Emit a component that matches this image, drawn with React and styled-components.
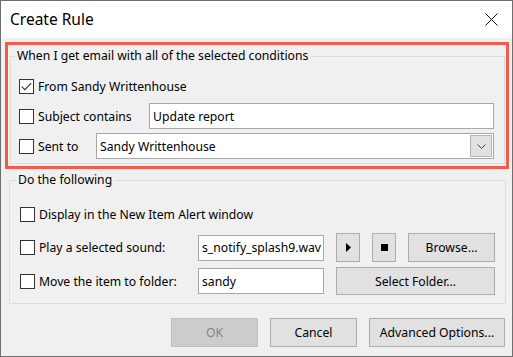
import React from "react";
import styled, { createGlobalStyle } from "styled-components";

const Global = createGlobalStyle`
  html, body { margin: 0; padding: 0; background: #ffffff; }
  * { box-sizing: border-box; }
  body { font-family: "Noto Sans", "Open Sans", sans-serif; }
`;

const Window = styled.div`
  width: 513px;
  height: 357px;
  border: 1px solid #6f6f6f;
  display: flex;
  flex-direction: column;
  background: #f0f0f0;
  font-family: "Noto Sans", "Open Sans", sans-serif;
  font-size: 12.2px;
  color: #000;
`;

const TitleBar = styled.div`
  height: 37px;
  flex: none;
  background: #ffffff;
  display: flex;
  align-items: center;
  justify-content: space-between;
  padding: 0 14px 0 9px;
`;

const Title = styled.div`
  font-size: 15.5px;
  color: #000;
  padding-bottom: 1px;
`;

const CloseBtn = styled.div`
  width: 14px;
  height: 14px;
  display: flex;
  align-items: center;
  justify-content: center;
`;

const Body = styled.div`
  flex: 1;
  display: flex;
  flex-direction: column;
  padding: 4px 7px 9px 4px;
`;

const Highlight = styled.div`
  width: 504px;
  height: 127px;
  border: 3px solid #f45a4d;
  padding: 11px 0 0 2px;
  display: flex;
  flex-direction: column;
`;

const Group = styled.div`
  position: relative;
  border: 1px solid #dcdcdc;
  width: ${(p) => p.$w}px;
  height: ${(p) => p.$h}px;
  margin-left: ${(p) => p.$ml || 0}px;
  margin-top: ${(p) => p.$mt || 0}px;
  padding: ${(p) => p.$pt}px 10px 0 ${(p) => p.$pl}px;
  display: flex;
  flex-direction: column;
`;

const Legend = styled.span`
  position: absolute;
  top: -10px;
  left: ${(p) => p.$l}px;
  padding: 0 2px 0 2px;
  background: #f0f0f0;
  line-height: 18px;
  white-space: nowrap;
`;

const Row = styled.div`
  display: flex;
  align-items: center;
  height: ${(p) => p.$h}px;
  margin-top: ${(p) => p.$mt || 0}px;
`;

const Box = styled.span`
  width: 15px;
  height: 15px;
  flex: none;
  border: 1px solid #333333;
  background: #ffffff;
  display: flex;
  align-items: center;
  justify-content: center;
`;

const Label = styled.span`
  margin-left: 4px;
  white-space: nowrap;
  width: ${(p) => (p.$w ? `${p.$w}px` : "auto")};
  flex: none;
`;

const TextBox = styled.div`
  height: ${(p) => p.$h || 26}px;
  width: ${(p) => (p.$w ? `${p.$w}px` : "auto")};
  flex: ${(p) => (p.$w ? "none" : "1")};
  border: 1px solid #a8a8a8;
  background: #ffffff;
  display: flex;
  align-items: center;
  padding-left: 3px;
  white-space: nowrap;
  overflow: hidden;
  position: relative;
`;

const DropBtn = styled.span`
  position: absolute;
  right: 1px;
  top: 1px;
  bottom: 1px;
  width: 22px;
  background: #e1e1e1;
  border: 1px solid #b5b5b5;
  display: flex;
  align-items: center;
  justify-content: center;
`;

const Button = styled.div`
  height: ${(p) => p.$h || 29}px;
  width: ${(p) => p.$w}px;
  margin-left: ${(p) => p.$ml || 0}px;
  flex: none;
  background: ${(p) => (p.$disabled ? "#cccccc" : "#e1e1e1")};
  border: 1px solid ${(p) => (p.$disabled ? "#bfbfbf" : "#adadad")};
  color: ${(p) => (p.$disabled ? "#838383" : "#000")};
  display: flex;
  align-items: center;
  justify-content: center;
  white-space: nowrap;
`;

const Footer = styled.div`
  display: flex;
  justify-content: flex-end;
  margin-top: 14px;
`;

const Check = ({ checked }) => (
  <Box>
    {checked && (
      <svg width="11" height="9" viewBox="0 0 11 9">
        <path d="M0.8 4.6 L3.8 7.6 L10.2 1.2" fill="none" stroke="#333" strokeWidth="1.1" />
      </svg>
    )}
  </Box>
);

export default function App() {
  return (
    <>
      <Global />
      <Window>
        <TitleBar>
          <Title>Create Rule</Title>
          <CloseBtn>
            <svg width="13" height="13" viewBox="0 0 13 13">
              <path d="M0.5 0.5 L12.5 12.5 M12.5 0.5 L0.5 12.5" stroke="#111" strokeWidth="1" />
            </svg>
          </CloseBtn>
        </TitleBar>
        <Body>
          <Highlight>
            <Group $w={495} $h={108} $pt={22} $pl={8}>
              <Legend $l={4}>When I get email with all of the selected conditions</Legend>
              <Row $h={15}>
                <Check checked />
                <Label>From Sandy Writtenhouse</Label>
              </Row>
              <Row $h={26} $mt={9}>
                <Check />
                <Label $w={111}>Subject contains</Label>
                <TextBox>Update report</TextBox>
              </Row>
              <Row $h={26} $mt={4}>
                <Check />
                <Label $w={58}>Sent to</Label>
                <TextBox>
                  Sandy Writtenhouse
                  <DropBtn>
                    <svg width="9" height="5" viewBox="0 0 9 5">
                      <path d="M0.5 0.5 L4.5 4.5 L8.5 0.5" fill="none" stroke="#444" strokeWidth="1" />
                    </svg>
                  </DropBtn>
                </TextBox>
              </Row>
            </Group>
          </Highlight>
          <Group $w={497} $h={124} $pt={26} $pl={10} $ml={4} $mt={11}>
            <Legend $l={6}>Do the following</Legend>
            <Row $h={15}>
              <Check />
              <Label>Display in the New Item Alert window</Label>
            </Row>
            <Row $h={29} $mt={11}>
              <Check />
              <Label $w={159}>Play a selected sound:</Label>
              <TextBox $w={126} $h={26}>s_notify_splash9.wav</TextBox>
              <Button $w={24} $ml={12}>
                <svg width="5" height="9" viewBox="0 0 5 9">
                  <path d="M0 0 L5 4.5 L0 9 Z" fill="#000" />
                </svg>
              </Button>
              <Button $w={24} $ml={12}>
                <svg width="7" height="7" viewBox="0 0 7 7">
                  <rect width="7" height="7" fill="#000" />
                </svg>
              </Button>
              <Button $w={87} $ml={12}>Browse...</Button>
            </Row>
            <Row $h={28} $mt={5}>
              <Check />
              <Label $w={159}>Move the item to folder:</Label>
              <TextBox $w={126} $h={26}>sandy</TextBox>
              <Button $w={159} $ml={12} $h={28}>Select Folder...</Button>
            </Row>
          </Group>
          <Footer>
            <Button $w={87} $disabled>OK</Button>
            <Button $w={87} $ml={12}>Cancel</Button>
            <Button $w={136} $ml={12}>Advanced Options...</Button>
          </Footer>
        </Body>
      </Window>
    </>
  );
}
